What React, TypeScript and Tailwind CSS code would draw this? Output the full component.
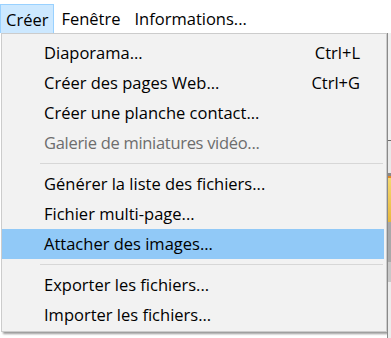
type Item = { label: string; shortcut?: string; disabled?: boolean; active?: boolean } | "sep";

const items: Item[] = [
  { label: "Diaporama...", shortcut: "Ctrl+L" },
  { label: "Créer des pages Web...", shortcut: "Ctrl+G" },
  { label: "Créer une planche contact..." },
  { label: "Galerie de miniatures vidéo...", disabled: true },
  "sep",
  { label: "Générer la liste des fichiers..." },
  { label: "Fichier multi-page..." },
  { label: "Attacher des images...", active: true },
  "sep",
  { label: "Exporter les fichiers..." },
  { label: "Importer les fichiers..." },
];

export default function App() {
  return (
    <div
      className="w-[391px] h-[338px] bg-white overflow-hidden text-[16.5px] text-black"
      style={{ fontFamily: "'Open Sans', 'Noto Sans', sans-serif" }}
    >
      {/* --- Menu bar --- */}
      <div className="flex h-[33px] items-stretch pt-[4px] bg-white">
        <div className="px-[5px] pt-[2px] flex items-center bg-[#cce8ff] border border-[#99d1ff] border-b-0">Créer</div>
        <div className="px-[7px] pt-[2px] flex items-center">Fenêtre</div>
        <div className="px-[7px] pt-[2px] flex items-center">Informations...</div>
      </div>

      <div className="flex">
        {/* --- Dropdown panel --- */}
        <div className="ml-[1px] w-[386px] h-[299px] bg-[#f2f2f2] border border-[#cccccc] py-[4px] shadow-[2px_2px_2px_rgba(0,0,0,0.4)]">
          {items.map((it, i) =>
            it === "sep" ? (
              <div key={i} className="h-[11px] flex items-center pl-[38px] pr-[3px]">
                <div className="w-full h-[1px] bg-[#d7d7d7]" />
              </div>
            ) : (
              <div
                key={i}
                className={`h-[30px] flex items-center justify-between pl-[42px] pr-[24px] mr-[2px] ${
                  it.active ? "bg-[#91c9f7]" : ""
                } ${it.disabled ? "text-[#6d6d6d] tracking-[-0.3px]" : ""}`}
              >
                <span>{it.label}</span>
                {it.shortcut && <span>{it.shortcut}</span>}
              </div>
            )
          )}
        </div>

        {/* --- Window behind the menu --- */}
        <div className="w-[4px] h-[305px] flex flex-col border-l border-[#8a8a8a]">
          <div className="h-[107px] bg-[#f0f0f0]" />
          <div className="h-[1px] bg-[#6b6b6b]" />
          <div className="h-[32px] bg-[#e9e9e9]" />
          <div className="h-[3px] bg-[#8a8a8a]" />
          <div className="h-[2px] bg-[#e08a2a]" />
          <div className="h-[44px] bg-gradient-to-b from-[#f4d870] to-[#e8b83c]" />
          <div className="h-[40px] bg-[#a9a9a9]" />
          <div className="h-[20px] bg-[#c8c8c8]" />
          <div className="flex-1 bg-[#ececec]" />
        </div>
      </div>
    </div>
  );
}
